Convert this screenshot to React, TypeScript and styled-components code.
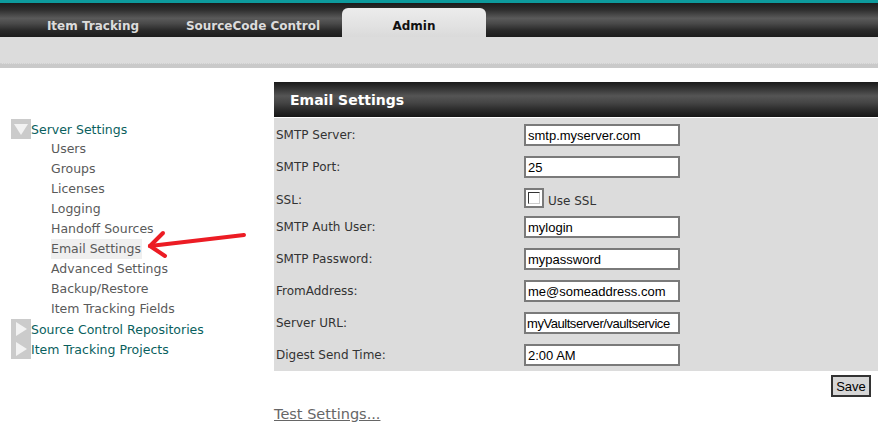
import styled, { createGlobalStyle } from 'styled-components';

const GlobalStyle = createGlobalStyle`
  html, body {
    margin: 0;
    padding: 0;
    background: #ffffff;
  }
  body {
    font-family: 'DejaVu Sans', Verdana, sans-serif;
    width: 878px;
    height: 440px;
    overflow: hidden;
  }
`;

const Page = styled.div`
  position: relative;
  width: 878px;
  height: 440px;
`;

const TabBar = styled.div`
  height: 34px;
  border-top: 3px solid #0d9a9c;
  background: linear-gradient(
    to bottom,
    #1b1b1b 0%,
    #2e2e2e 20%,
    #5a5a5a 45%,
    #4a4a4a 60%,
    #2a2a2a 80%,
    #1c1c1c 100%
  );
  display: flex;
  align-items: flex-end;
  padding-left: 13px;
`;

const Tab = styled.div<{ $active?: boolean; $width: number }>`
  width: ${(p) => p.$width}px;
  height: ${(p) => (p.$active ? 29 : 34)}px;
  margin-left: ${(p) => (p.$active ? 9 : 0)}px;
  display: flex;
  align-items: center;
  justify-content: center;
  font-size: 12px;
  font-weight: bold;
  color: ${(p) => (p.$active ? '#111' : '#dcdcdc')};
  background: ${(p) =>
    p.$active ? 'linear-gradient(to bottom, #ececec, #e2e2e2 60%, #dadada)' : 'transparent'};
  border-radius: ${(p) => (p.$active ? '6px 6px 0 0' : '0')};
  box-sizing: border-box;
  padding-top: ${(p) => (p.$active ? 7 : 12)}px;
`;

const SubBand = styled.div`
  height: 26px;
  background: #dcdcdc;
  border-bottom: 1px dotted #cfcfcf;
  box-shadow: 0 4px 0 #c9c9c9;
  margin-bottom: 4px;
`;

const Body = styled.div`
  display: flex;
`;

const Nav = styled.div`
  width: 274px;
  padding-top: 51px;
  box-sizing: border-box;
`;

const NavGroup = styled.div`
  display: flex;
  align-items: center;
  height: 20px;
  padding-left: 11px;
  font-size: 12.5px;
  color: #0a5f5e;
`;

const Toggle = styled.span`
  width: 20px;
  height: 20px;
  background: #cbcbcb;
  display: inline-flex;
  align-items: center;
  justify-content: center;
`;

const NavItem = styled.div<{ $selected?: boolean }>`
  height: 20px;
  line-height: 20px;
  margin-left: 51px;
  padding-right: 1px;
  font-size: 12.5px;
  color: #5a5a5a;
  width: fit-content;
  background: ${(p) => (p.$selected ? '#efefef' : 'transparent')};
`;

const Main = styled.div`
  width: 604px;
  padding-top: 14px;
`;

const PanelHeader = styled.div`
  height: 35px;
  border-bottom: 1px solid #ffffff;
  background: linear-gradient(
    to bottom,
    #1a1a1a 0%,
    #333 18%,
    #555 40%,
    #444 60%,
    #2a2a2a 80%,
    #161616 100%
  );
  display: flex;
  align-items: center;
  padding-left: 16px;
  color: #ffffff;
  font-size: 14px;
  font-weight: bold;
`;

const Form = styled.div`
  background: #dcdcdc;
  padding: 6px 0 5px 2px;
  display: grid;
  grid-template-columns: 248px 1fr;
  row-gap: 10px;
`;

const Label = styled.div<{ $h: number }>`
  height: ${(p) => p.$h}px;
  line-height: ${(p) => (p.$h === 22 ? 22 : 24)}px;
  font-size: 12px;
  color: #333;
`;

const Field = styled.div<{ $h: number }>`
  height: ${(p) => p.$h}px;
`;

const TextInput = styled.input<{ $tight?: boolean }>`
  width: 156px;
  height: 22px;
  box-sizing: border-box;
  border: 2px solid #7a7a7a;
  background: #ffffff;
  padding: ${(p) => (p.$tight ? '0 0 0 1px' : '0 2px')};
  letter-spacing: ${(p) => (p.$tight ? '-0.45px' : 'normal')};
  font-family: 'Liberation Sans', Arial, sans-serif;
  font-size: 13px;
  color: #000;
  outline: none;
`;

const CheckWrap = styled.label`
  display: flex;
  align-items: flex-end;
  font-size: 12px;
  color: #333;
  gap: 4px;
`;

const CheckBox = styled.span`
  width: 20px;
  height: 20px;
  box-sizing: border-box;
  border: 2px solid #7a7a7a;
  background: #ffffff;
  display: inline-flex;
  padding: 2px;
  span {
    flex: 1;
    border-top: 1px solid #333;
    border-left: 1px solid #333;
    border-right: 1px solid #ccc;
    border-bottom: 1px solid #ccc;
  }
`;

const SaveRow = styled.div`
  display: flex;
  justify-content: flex-end;
  padding: 4px 7px 0 0;
`;

const SaveButton = styled.button`
  width: 40px;
  height: 22px;
  border: 2px solid #333;
  background: #d6d6d6;
  font-family: 'Liberation Sans', Arial, sans-serif;
  font-size: 13px;
  padding: 0;
  color: #000;
`;

const TestLink = styled.a`
  display: inline-block;
  margin-top: 9px;
  font-size: 14.5px;
  color: #666;
  text-decoration: underline;
`;

const Arrow = styled.svg`
  position: absolute;
  left: 0;
  top: 0;
  pointer-events: none;
`;

const rows: { label: string; value?: string; check?: boolean; tight?: boolean }[] = [
  { label: 'SMTP Server:', value: 'smtp.myserver.com' },
  { label: 'SMTP Port:', value: '25' },
  { label: 'SSL:', check: true },
  { label: 'SMTP Auth User:', value: 'mylogin' },
  { label: 'SMTP Password:', value: 'mypassword' },
  { label: 'FromAddress:', value: 'me@someaddress.com' },
  { label: 'Server URL:', value: 'myVaultserver/vaultservice', tight: true },
  { label: 'Digest Send Time:', value: '2:00 AM' },
];

const subItems = [
  'Users',
  'Groups',
  'Licenses',
  'Logging',
  'Handoff Sources',
  'Email Settings',
  'Advanced Settings',
  'Backup/Restore',
  'Item Tracking Fields',
];

function TreeIcon({ open }: { open?: boolean }) {
  return (
    <Toggle>
      <svg width="16" height="16" viewBox="0 0 16 16">
        {open ? (
          <polygon points="1,3 15,3 8,14" fill="#f2f2f2" />
        ) : (
          <polygon points="3,1 14,8 3,15" fill="#f2f2f2" />
        )}
      </svg>
    </Toggle>
  );
}

export default function App() {
  return (
    <Page>
      <GlobalStyle />
      <TabBar>
        <Tab $width={160}>Item Tracking</Tab>
        <Tab $width={160}>SourceCode Control</Tab>
        <Tab $width={144} $active>
          Admin
        </Tab>
      </TabBar>
      <SubBand />
      <Body>
        <Nav>
          <NavGroup>
            <TreeIcon open />
            Server Settings
          </NavGroup>
          {subItems.map((s) => (
            <NavItem key={s} $selected={s === 'Email Settings'}>
              {s}
            </NavItem>
          ))}
          <NavGroup>
            <TreeIcon />
            Source Control Repositories
          </NavGroup>
          <NavGroup>
            <TreeIcon />
            Item Tracking Projects
          </NavGroup>
        </Nav>
        <Main>
          <PanelHeader>Email Settings</PanelHeader>
          <Form>
            {rows.map((r) => {
              const h = r.check ? 18 : 22;
              return [
                <Label key={r.label + 'l'} $h={h}>
                  {r.label}
                </Label>,
                <Field key={r.label + 'f'} $h={h}>
                  {r.check ? (
                    <CheckWrap>
                      <CheckBox>
                        <span />
                      </CheckBox>
                      Use SSL
                    </CheckWrap>
                  ) : (
                    <TextInput defaultValue={r.value} $tight={r.tight} />
                  )}
                </Field>,
              ];
            })}
          </Form>
          <SaveRow>
            <SaveButton>Save</SaveButton>
          </SaveRow>
          <TestLink>Test Settings...</TestLink>
        </Main>
      </Body>
      <Arrow width="878" height="440">
        <g stroke="#ec1c24" strokeWidth="4" strokeLinecap="round" fill="none">
          <line x1="150" y1="246" x2="244" y2="235" />
          <line x1="150" y1="246" x2="163" y2="233" />
          <line x1="150" y1="246" x2="165" y2="256" />
        </g>
      </Arrow>
    </Page>
  );
}
